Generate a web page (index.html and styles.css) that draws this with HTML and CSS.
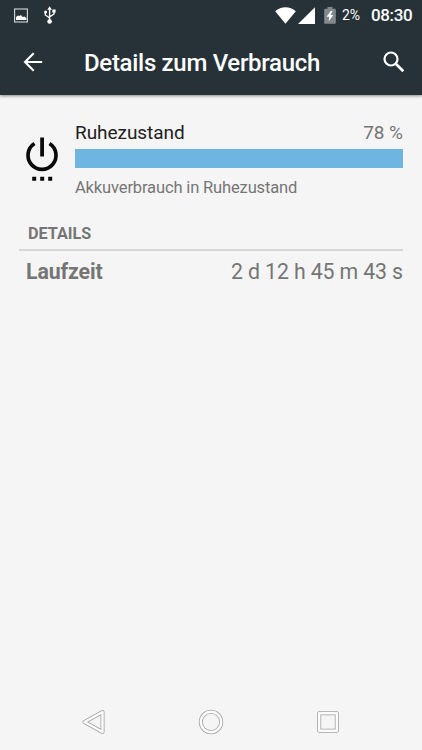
FILE: index.html
```html
<!DOCTYPE html>
<html lang="de">
<head>
<meta charset="utf-8">
<title>Details zum Verbrauch</title>
<link rel="stylesheet" href="styles.css">
</head>
<body>
<header class="top">
  <div class="status">
    <svg class="picture" width="14" height="15" viewBox="0 0 14 15"><rect x=".6" y="1" width="12.8" height="13" fill="none" stroke="#d5d9db" stroke-width="1.1"/><path d="M2 12V9l2-1.500 1.500.5L7 7l1.500 2 2-.5 2 1.500v2z" fill="#fff"/></svg>
    <svg class="usb" width="12" height="18" viewBox="0 0 12 18" fill="none" stroke="#fff" stroke-width="1.400"><path d="M5.600 3v11M1.300 6v3l4.300 3M10 6v2L5.600 11"/><path d="M3.300 3.700 5.600.2l2.300 3.500zM8.300 3.400h3.300v3.200H8.300z" fill="#fff" stroke="none"/><circle cx="1.600" cy="6" r="1.500" fill="#fff" stroke="none"/><circle cx="5.600" cy="15.500" r="2.300" fill="#fff" stroke="none"/></svg>
    <span class="spacer"></span>
    <svg class="wifi" width="21" height="17" viewBox="0 0 21 17"><path d="M.2 4.200Q4.800.2 10.500.2t10.300 4L10.500 16.800z" fill="#fff"/></svg>
    <svg class="signal" width="17" height="17" viewBox="0 0 17 17"><path d="M0 17 17 .2V17z" fill="#fff"/></svg>
    <svg class="battery" width="12" height="17" viewBox="0 0 12 17"><path d="M3.500 0h5v1.700H11q.8 0 .8.8V16q0 .8-.8.8H1q-.8 0-.8-.8V2.500q0-.8.8-.8h2.500z" fill="#838a8e"/><path d="M6.800 4 2.500 9.700h2.800l-.6 4.500L9.300 8H6.500L8.500 4z" fill="#fff"/></svg>
    <span class="percent">2%</span>
    <span class="clock">08:30</span>
  </div>
  <div class="appbar">
    <svg class="back" width="20" height="20" viewBox="0 0 20 20" fill="none" stroke="#fff" stroke-width="2.100"><path d="M19.200 10H2M10.700 1.300 2 10l8.700 8.700"/></svg>
    <h1><span>Details zum Verbrauch</span></h1>
    <svg class="search" width="22" height="22" viewBox="0 0 22 22" fill="none" stroke="#fff" stroke-width="2.200"><circle cx="8" cy="8" r="6.500"/><path d="m13 13 7.300 7.300" stroke-width="2.700"/></svg>
  </div>
</header>
<main>
  <section class="usage">
    <svg class="power" width="34" height="46" viewBox="0 0 34 46"><path d="M9.500 6.500A14 14 0 1 0 24.500 6.500" fill="none" stroke="#0a0a0a" stroke-width="3.700"/><path d="M15.200.5h3.800v19h-3.800zM7.200 39.800h4v4h-4zM15.200 39.800h4v4h-4zM23.200 39.800h4v4h-4z" fill="#0a0a0a"/></svg>
    <div class="info">
      <div class="row"><span class="name">Ruhezustand</span><span class="share">78 %</span></div>
      <div class="bar"></div>
      <p>Akkuverbrauch in Ruhezustand</p>
    </div>
  </section>
  <h2><span>DETAILS</span></h2>
  <div class="runtime"><b>Laufzeit</b><span>2 d 12 h 45 m 43 s</span></div>
</main>
<nav>
  <svg width="26" height="26" viewBox="0 0 26 26" fill="none" stroke-linejoin="round"><path d="M3.500 13 21.500 3v20z" stroke="#a2a2a2" stroke-width="4"/><path d="M3.500 13 21.500 3v20z" stroke="#fcfcfc" stroke-width="2.400"/></svg>
  <svg width="26" height="26" viewBox="0 0 26 26" fill="none"><circle cx="13" cy="13" r="10.200" stroke="#a2a2a2" stroke-width="4"/><circle cx="13" cy="13" r="10.200" stroke="#fcfcfc" stroke-width="2.400"/></svg>
  <svg width="26" height="26" viewBox="0 0 26 26" fill="none" stroke-linejoin="round"><path d="M4.200 4.200h17.600v17.600H4.200z" stroke="#a2a2a2" stroke-width="4"/><path d="M4.200 4.200h17.600v17.600H4.200z" stroke="#fcfcfc" stroke-width="2.400"/></svg>
</nav>
</body>
</html>
```
FILE: styles.css
```css
* { box-sizing: border-box; }
body {
  margin: 0;
  height: 750px;
  display: flex;
  flex-direction: column;
  overflow: hidden;
  background: #f5f5f5;
  color: #757575;
  font-family: Roboto, sans-serif;
}
svg { display: block; flex: none; }
h1, h2, p { margin: 0; }
span, b { white-space: nowrap; }
.top {
  height: 95px;
  flex: none;
  background: #263238;
  color: #fff;
  box-shadow: 0 1px 3px rgba(0, 0, 0, .45);
}
.status {
  height: 30px;
  display: flex;
  align-items: center;
  padding: 0 10px 0 14px;
}
.usb { margin-left: 16px; }
.spacer { flex: 1; }
.signal { margin: 0 9px 0 2px; }
.percent { width: 29px; margin-left: 6px; font-size: 14px; }
.clock { width: 41px; font-size: 17px; font-weight: 500; letter-spacing: -.35px; }
.appbar {
  height: 65px;
  display: flex;
  align-items: center;
  padding: 0 17px 2px 23px;
}
h1 {
  flex: 1;
  margin-left: 41px;
  padding-top: 2px;
  font-size: 24px;
  line-height: 28px;
  font-weight: 500;
  letter-spacing: -.3px;
}
main { flex: 1; padding: 26px 19px 0; }
.usage { display: flex; }
.power { margin: 16px 16px 0 6px; }
.info { flex: 1; }
.row {
  display: flex;
  justify-content: space-between;
  line-height: 24px;
  font-size: 19px;
  letter-spacing: -.05px;
}
.name { color: #212121; }
.bar { height: 19px; margin-top: 4px; background: #6eb5e2; }
.info p {
  margin-top: 8px;
  padding-top: 1px;
  line-height: 21px;
  font-size: 16.5px;
  letter-spacing: -.14px;
}
h2 {
  height: 29px;
  margin-top: 24px;
  padding: 1px 0 0 9px;
  border-bottom: 2px solid #d6d6d6;
  font-size: 16.2px;
  line-height: 22px;
  font-weight: 700;
}
.runtime {
  display: flex;
  justify-content: space-between;
  margin-top: 7px;
  padding-left: 7px;
  font-size: 21.3px;
  line-height: 28px;
  letter-spacing: -.12px;
}
nav {
  height: 56px;
  flex: none;
  display: flex;
  justify-content: space-between;
  align-items: center;
  padding: 0 81px;
}
```
